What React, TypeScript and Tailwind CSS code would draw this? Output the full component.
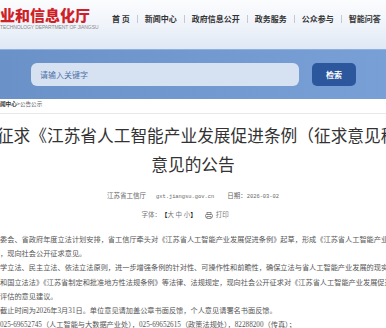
import React from "react";

const navItems = ["首 页", "新闻中心", "政府信息公开", "政务服务", "公众参与", "智能问答"];

const bodyLines = [
    "委会、省政府年度立法计划安排，省工信厅牵头对《江苏省人工智能产业发展促进条例》起草，形成《江苏省人工智能产业发展促进条例（征求意见稿）》",
    "，现向社会公开征求意见。",
    "学立法、民主立法、依法立法原则，进一步增强条例的针对性、可操作性和前瞻性，确保立法与省人工智能产业发展的现实需要相适应",
    "和国立法法》《江苏省制定和批准地方性法规条例》等法律、法规规定，现向社会公开征求对《江苏省人工智能产业发展促进条例》",
    "评估的意见建议。",
    "截止时间为2026年3月31日。单位意见请加盖公章书面反馈，个人意见请署名书面反馈。",
    "025-69652745（人工智能与大数据产业处），025-69652615（政策法规处），82288200（传真）；",
];

const PrintIcon = () => (
    <svg width="8" height="7" viewBox="0 0 8 7" fill="none" stroke="#777" strokeWidth="0.8">
        <rect x="2" y="0.5" width="4" height="2" />
        <rect x="0.5" y="2.5" width="7" height="3" rx="0.8" />
        <rect x="2" y="4.5" width="4" height="2" fill="#fff" />
    </svg>
);

export default function App() {
    return (
        <div className="w-[386px] h-[328px] overflow-hidden bg-white font-['Noto_Sans_CJK_SC',sans-serif]">
            {/* header */}
            <header className="h-[49px] flex items-start bg-gradient-to-b from-[#fbfcfe] via-[#f0f4fa] to-[#dfe8f5]">
                <div className="w-[100px] shrink-0 pt-[6px]">
                    <div className="text-[15px] leading-[18px] font-black text-[#cf1f27] whitespace-nowrap">
                        业和信息化厅
                    </div>
                    <div className="text-[5px] leading-[6px] text-[#8a8a8a] whitespace-nowrap tracking-[-0.1px] font-['Liberation_Sans',sans-serif]">
                        TECHNOLOGY DEPARTMENT OF JIANGSU
                    </div>
                </div>
                <nav className="ml-[12px] mt-[13px] flex items-center gap-[7px] text-[8px] leading-[12px] font-bold text-[#333] whitespace-nowrap">
                    {navItems.map((item, i) => (
                        <React.Fragment key={item}>
                            {i > 0 && <span className="w-px h-[8px] bg-[#c4c9d1]" />}
                            <span>{item}</span>
                        </React.Fragment>
                    ))}
                </nav>
            </header>

            {/* search band */}
            <div className="h-[50px] flex items-start bg-gradient-to-r from-[#6b91c9] to-[#78a0d6] border-t border-[#8fb0de]">
                <div className="ml-[31px] mt-[13px] w-[268px] h-[23px] rounded-[6px] bg-[#d6e2f2] pl-[9px] flex items-center text-[8px] text-[#4f70a6]">
                    请输入关键字
                </div>
                <button
                    type="button"
                    className="ml-[13px] mt-[13px] w-[44px] h-[23px] rounded-[5px] bg-[#2c579c] text-white text-[8px] font-bold"
                >
                    检索
                </button>
            </div>

            {/* breadcrumb */}
            <div className="h-[15px] pt-[2px] border-b border-[#e8e8e8] text-[5.6px] leading-[6px] text-[#666] whitespace-nowrap">
                <span className="text-[#333] font-bold">闻中心</span>&gt;公告公示
            </div>

            {/* article head */}
            <div className="w-[466px] ml-[-40px] pt-[7px] text-center">
                <h1 className="text-[16.7px] leading-[29px] text-[#333] font-normal">
                    关于征求《江苏省人工智能产业发展促进条例（征求意见稿）》意见的公告
                </h1>
                <div className="mt-[11px] flex justify-center items-baseline text-[6.5px] leading-[12px] text-[#666] font-['Liberation_Serif','Noto_Sans_CJK_SC',serif] whitespace-nowrap">
                    <span>江苏省工信厅</span>
                    <span className="ml-[10px] font-['Liberation_Mono',monospace] text-[5.4px]">gxt.jiangsu.gov.cn</span>
                    <span className="ml-[13px]">
                        日期：<span className="font-['Liberation_Mono',monospace] text-[5.4px]">2026-03-02</span>
                    </span>
                </div>
                <div className="mt-[6px] pr-[16px] flex justify-center items-center text-[6.5px] leading-[12px] text-[#777] font-['Liberation_Serif','Noto_Sans_CJK_SC',serif] whitespace-nowrap">
                    <span>字体：</span>
                    <span className="font-bold text-[#222]">【</span>
                    <span>大 中 小</span>
                    <span className="font-bold text-[#222]">】</span>
                    <span className="ml-[8px] mr-[3px] flex"><PrintIcon /></span>
                    <span>打印</span>
                </div>
            </div>

            {/* body */}
            <div className="mt-[12px] text-[7.2px] leading-[14.2px] text-[#555] font-['Liberation_Serif','Noto_Sans_CJK_SC',serif]">
                {bodyLines.map((line, i) => (
                    <div key={i} className="whitespace-nowrap overflow-hidden">
                        {line}
                    </div>
                ))}
            </div>
        </div>
    );
}
